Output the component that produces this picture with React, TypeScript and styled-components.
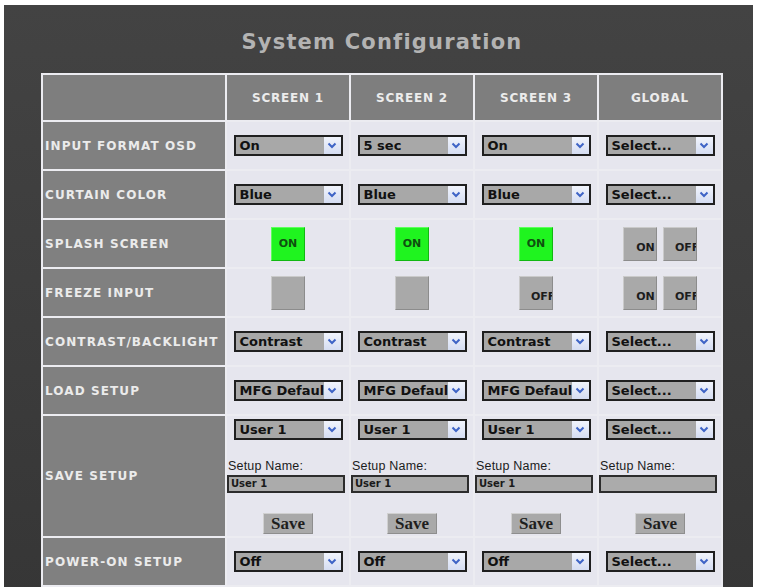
import React from 'react';
import styled, { createGlobalStyle } from 'styled-components';

const GlobalStyle = createGlobalStyle`
  body {
    margin: 0;
    background: #ffffff;
    font-family: 'DejaVu Sans', Verdana, sans-serif;
  }
`;

const Panel = styled.div`
  margin: 5px 0 0 4px;
  width: 749px;
  box-sizing: border-box;
  padding: 0 30px 12px 37px;
  background: linear-gradient(#434343, #363636);
`;

const Title = styled.h1`
  margin: 0;
  padding: 25px 0 19px;
  height: 24px;
  line-height: 24px;
  text-align: center;
  font-size: 21px;
  font-weight: bold;
  letter-spacing: 1.2px;
  color: #b3b3b3;
`;

const Grid = styled.table`
  width: 682px;
  table-layout: fixed;
  border-spacing: 2px;
  background: #ececf1;
`;

const HeadCell = styled.th`
  height: 45px;
  padding: 0;
  background: #7e7e7e;
  color: #ececec;
  font-size: 12px;
  font-weight: bold;
  letter-spacing: 0.8px;
  text-align: center;
  vertical-align: middle;
`;

const Label = styled.th<{ $tall?: boolean }>`
  height: ${(p) => (p.$tall ? 120 : 47)}px;
  padding: 0 0 0 2px;
  background: #808080;
  color: #ebebeb;
  font-size: 12px;
  font-weight: bold;
  letter-spacing: 1.1px;
  text-align: left;
  white-space: nowrap;
  overflow: visible;
  vertical-align: middle;
`;

const Cell = styled.td`
  padding: 0;
  background: #e6e6ee;
  text-align: center;
  vertical-align: middle;
`;

const SelectBox = styled.div`
  display: inline-flex;
  width: 109px;
  height: 21px;
  box-sizing: border-box;
  border: 2px solid #1f1f1f;
  background: #a8a8a8;
  text-align: left;
`;

const SelectValue = styled.span`
  flex: 1;
  overflow: hidden;
  white-space: nowrap;
  padding-left: 4px;
  font-size: 13px;
  font-weight: bold;
  line-height: 17px;
  color: #111;
`;

const SelectArrow = styled.span`
  width: 17px;
  display: flex;
  align-items: center;
  justify-content: center;
  background: linear-gradient(#f1f4fc, #d5ddf2);
`;

const Toggle = styled.span<{ $lit?: boolean }>`
  display: inline-flex;
  align-items: center;
  justify-content: ${(p) => (p.$lit ? 'center' : 'flex-start')};
  width: 34px;
  height: 34px;
  box-sizing: border-box;
  padding: ${(p) => (p.$lit ? '0' : '7px 0 0 11px')};
  background: ${(p) => (p.$lit ? '#1ff41f' : '#a9a9a9')};
  border: 1px solid;
  border-color: ${(p) =>
    p.$lit ? '#5cff5c #12b812 #12b812 #5cff5c' : '#cacaca #8c8c8c #8c8c8c #cacaca'};
  vertical-align: middle;
`;

const ToggleText = styled.span<{ $lit?: boolean }>`
  display: block;
  width: ${(p) => (p.$lit ? 'auto' : '21px')};
  overflow: hidden;
  white-space: nowrap;
  font-size: 11px;
  font-weight: bold;
  color: ${(p) => (p.$lit ? '#0f4f0f' : '#1d1d1d')};
`;

const Pair = styled.div`
  display: flex;
  justify-content: center;
  gap: 6px;
`;

const SaveStack = styled.div`
  display: flex;
  flex-direction: column;
  align-items: center;
  padding: 3px 0 2px;
`;

const NameCaption = styled.div`
  align-self: stretch;
  margin-top: 19px;
  padding-left: 1px;
  text-align: left;
  font-family: 'Liberation Sans', Arial, sans-serif;
  font-size: 12.5px;
  letter-spacing: 0.2px;
  line-height: 14px;
  color: #1c1c1c;
`;

const NameInput = styled.div`
  align-self: flex-start;
  margin-top: 2px;
  width: 118px;
  height: 18px;
  box-sizing: border-box;
  border: 2px solid #2c2c2c;
  background: #ababab;
  padding-left: 2px;
  text-align: left;
  font-size: 10px;
  font-weight: bold;
  line-height: 14px;
  color: #1a1a1a;
`;

const SaveButton = styled.span`
  margin-top: 20px;
  width: 50px;
  height: 21px;
  box-sizing: border-box;
  border: 1px solid;
  border-color: #d0d0d0 #8e8e8e #8e8e8e #d0d0d0;
  background: #a9a9a9;
  font-family: 'Liberation Serif', 'Times New Roman', serif;
  font-size: 17px;
  font-weight: bold;
  line-height: 19px;
  text-align: center;
  color: #1e1e1e;
`;

const Chevron = () => (
  <svg width="10" height="7" viewBox="0 0 10 7">
    <path d="M1.5 1.5 L5 5 L8.5 1.5" fill="none" stroke="#3e64c6" strokeWidth="2" />
  </svg>
);

const Select = ({ value }: { value: string }) => (
  <SelectBox>
    <SelectValue>{value}</SelectValue>
    <SelectArrow>
      <Chevron />
    </SelectArrow>
  </SelectBox>
);

const Btn = ({ text, lit }: { text?: string; lit?: boolean }) => (
  <Toggle $lit={lit}>{text && <ToggleText $lit={lit}>{text}</ToggleText>}</Toggle>
);

const OnOff = () => (
  <Pair>
    <Btn text="ON" />
    <Btn text="OFF" />
  </Pair>
);

const SaveSlot = ({ name }: { name: string }) => (
  <SaveStack>
    <Select value={name ? name : 'Select...'} />
    <NameCaption>Setup Name:</NameCaption>
    <NameInput>{name}</NameInput>
    <SaveButton>Save</SaveButton>
  </SaveStack>
);

const selectRows: [string, string[]][] = [
  ['INPUT FORMAT OSD', ['On', '5 sec', 'On', 'Select...']],
  ['CURTAIN COLOR', ['Blue', 'Blue', 'Blue', 'Select...']],
];

const lowerRows: [string, string[]][] = [
  ['CONTRAST/BACKLIGHT', ['Contrast', 'Contrast', 'Contrast', 'Select...']],
  ['LOAD SETUP', ['MFG Default', 'MFG Default', 'MFG Default', 'Select...']],
];

const SelectRow = ({ label, values }: { label: string; values: string[] }) => (
  <tr>
    <Label>{label}</Label>
    {values.map((v, i) => (
      <Cell key={i}>
        <Select value={v} />
      </Cell>
    ))}
  </tr>
);

const App = () => {
  return (
    <>
      <GlobalStyle />
      <Panel>
        <Title>System Configuration</Title>
        <Grid>
          <colgroup>
            <col style={{ width: 182 }} />
            <col style={{ width: 122 }} />
            <col style={{ width: 122 }} />
            <col style={{ width: 122 }} />
            <col style={{ width: 122 }} />
          </colgroup>
          <thead>
            <tr>
              <HeadCell />
              <HeadCell>SCREEN 1</HeadCell>
              <HeadCell>SCREEN 2</HeadCell>
              <HeadCell>SCREEN 3</HeadCell>
              <HeadCell>GLOBAL</HeadCell>
            </tr>
          </thead>
          <tbody>
            {selectRows.map(([label, values]) => (
              <SelectRow key={label} label={label} values={values} />
            ))}
            <tr>
              <Label>SPLASH SCREEN</Label>
              <Cell><Btn text="ON" lit /></Cell>
              <Cell><Btn text="ON" lit /></Cell>
              <Cell><Btn text="ON" lit /></Cell>
              <Cell><OnOff /></Cell>
            </tr>
            <tr>
              <Label>FREEZE INPUT</Label>
              <Cell><Btn /></Cell>
              <Cell><Btn /></Cell>
              <Cell><Btn text="OFF" /></Cell>
              <Cell><OnOff /></Cell>
            </tr>
            {lowerRows.map(([label, values]) => (
              <SelectRow key={label} label={label} values={values} />
            ))}
            <tr>
              <Label $tall>SAVE SETUP</Label>
              <Cell><SaveSlot name="User 1" /></Cell>
              <Cell><SaveSlot name="User 1" /></Cell>
              <Cell><SaveSlot name="User 1" /></Cell>
              <Cell><SaveSlot name="" /></Cell>
            </tr>
            <SelectRow label="POWER-ON SETUP" values={['Off', 'Off', 'Off', 'Select...']} />
          </tbody>
        </Grid>
      </Panel>
    </>
  );
};

export default App;
